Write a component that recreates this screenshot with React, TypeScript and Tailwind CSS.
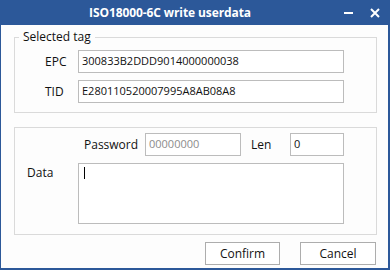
import React from 'react';

const font = { fontFamily: '"Open Sans", "Noto Sans", sans-serif' };

const Field = ({ value, className, muted }: { value: string; className: string; muted?: boolean }) => (
    <div className={`h-[23px] border border-[#bcbcbc] bg-white px-[3px] flex items-center text-[11px] ${muted ? 'text-[#8c8c8c]' : 'text-[#111]'} ${className}`}>
        {value}
    </div>
);

export default function App() {
    return (
        <div style={font} className="w-[390px] h-[270px] flex flex-col bg-[#2c5899] overflow-hidden select-none">
            {/* title bar */}
            <div className="h-[25px] shrink-0 flex items-center text-white">
                <div className="w-[340px] text-center text-[12px] font-bold tracking-[-0.1px]">ISO18000-6C write userdata</div>
                <div className="flex items-center gap-[17px] ml-[4px]">
                    <div className="w-[9px] h-[2px] bg-white mt-[1px]" />
                    <svg width="10" height="10" viewBox="0 0 10 10" className="mt-[1px]">
                        <path d="M1 1 L9 9 M9 1 L1 9" stroke="white" strokeWidth="2" />
                    </svg>
                </div>
            </div>

            {/* body */}
            <div className="flex-1 ml-[1px] mr-[2px] mb-[2px] bg-[#fdfdfd] text-[12px] text-[#111] flex flex-col px-[13px] pt-[5px]">
                <fieldset className="w-[363px] h-[83px] border border-[#dadada]">
                    <legend className="ml-[4px] px-[4px] text-[12px] leading-[14px]">Selected tag</legend>
                    <div className="flex items-center mt-[6px] pl-[30px]">
                        <span className="w-[33px]">EPC</span>
                        <Field value="300833B2DDD9014000000038" className="w-[266px]" />
                    </div>
                    <div className="flex items-center mt-[7px] pl-[30px]">
                        <span className="w-[33px]">TID</span>
                        <Field value="E280110520007995A8AB08A8" className="w-[266px]" />
                    </div>
                </fieldset>

                <div className="w-[363px] h-[108px] mt-[14px] border border-[#dadada] pt-[5px] pl-[12px]">
                    <div className="flex items-center pl-[57px]">
                        <span className="w-[61px]">Password</span>
                        <Field value="00000000" muted className="w-[96px]" />
                        <span className="ml-[10px] w-[39px]">Len</span>
                        <Field value="0" className="w-[54px]" />
                    </div>
                    <div className="flex mt-[7px]">
                        <span className="w-[51px] mt-[1px]">Data</span>
                        <div className="w-[266px] h-[61px] border border-[#bcbcbc] bg-white pl-[5px] pt-[3px]">
                            <div className="w-[1px] h-[12px] bg-black" />
                        </div>
                    </div>
                </div>

                <div className="flex justify-end gap-[20px] mt-[7px] mr-[-1px]">
                    <button className="w-[75px] h-[23px] border border-[#adadad] bg-white text-[12px] text-[#111]">Confirm</button>
                    <button className="w-[76px] h-[23px] border border-[#adadad] bg-white text-[12px] text-[#111]">Cancel</button>
                </div>
            </div>
        </div>
    );
}
